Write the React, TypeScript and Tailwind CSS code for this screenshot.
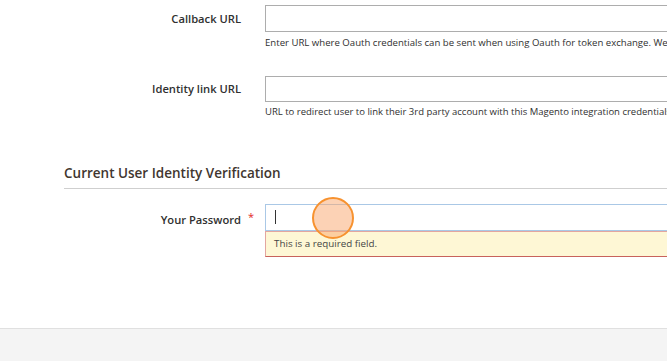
import React from "react";

export default function App() {
  return (
    <div
      className="relative w-[667px] h-[361px] overflow-hidden bg-white flex flex-col text-[#303030]"
      style={{ fontFamily: '"Open Sans", "Noto Sans", sans-serif' }}
    >
      {/* Callback URL */}
      <div className="mt-[5px] flex items-center">
        <label className="w-[241px] shrink-0 text-right text-[11.2px] font-semibold leading-[16px]">
          Callback URL
        </label>
        <div className="ml-[24px] w-[520px] h-[27px] shrink-0 border border-[#adadad] bg-white" />
      </div>
      <div className="ml-[265px] mt-[4px] text-[9.6px] leading-[14px] whitespace-nowrap">
        Enter URL where Oauth credentials can be sent when using Oauth for token exchange. We strongly recommend using https://.
      </div>

      {/* Identity link URL */}
      <div className="mt-[26px] flex items-center">
        <label className="w-[241px] shrink-0 text-right text-[11.2px] font-semibold leading-[16px]">
          Identity link URL
        </label>
        <div className="ml-[24px] w-[520px] h-[26px] shrink-0 border border-[#adadad] bg-white" />
      </div>
      <div className="ml-[265px] mt-[3px] text-[9.5px] leading-[14px] whitespace-nowrap">
        URL to redirect user to link their 3rd party account with this Magento integration credentials.
      </div>

      {/* Section heading */}
      <div className="ml-[64px] mt-[45px] pb-[6px] border-b border-[#cfcfcf]">
        <h2 className="text-[13.5px] font-semibold leading-[18px] text-[#41362f]">
          Current User Identity Verification
        </h2>
      </div>

      {/* Password */}
      <div className="mt-[15px] flex items-center">
        <div className="relative w-[241px] shrink-0 text-right">
          <label className="text-[11.2px] font-semibold leading-[16px]">Your Password</label>
          <span className="absolute left-[248px] top-[3px] text-[11px] leading-[16px] text-[#e22626]">*</span>
        </div>
        <div className="relative ml-[24px] w-[520px] h-[27px] shrink-0 border border-[#aac8e6] bg-white">
          <span className="absolute left-[9px] top-[5px] w-[1px] h-[14px] bg-[#333]" />
        </div>
      </div>
      <div className="ml-[265px] w-[520px] h-[26px] border border-[#e3a6a0] border-b-[#c8625c] bg-[#fef7d5] flex items-center pl-[8px]">
        <span className="text-[9.8px] leading-[14px] text-[#444]">This is a required field.</span>
      </div>

      {/* Footer */}
      <div className="mt-auto h-[33px] bg-[#f4f4f4] border-t border-[#e0e0e0]" />

      {/* Click indicator */}
      <div className="absolute left-[312px] top-[197px] w-[42px] h-[42px] rounded-full border-2 border-[#f7922f] bg-[#f9a66c]/50" />
    </div>
  );
}
